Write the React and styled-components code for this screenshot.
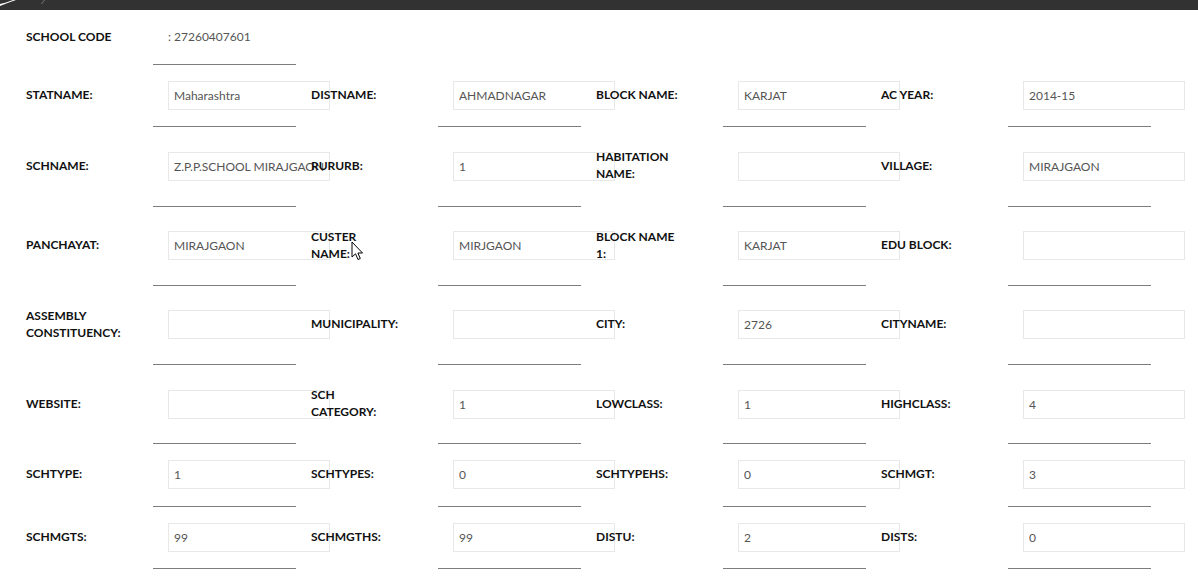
import styled, { createGlobalStyle } from "styled-components";

const rows = [
  [["STATNAME:", "Maharashtra"], ["DISTNAME:", "AHMADNAGAR"], ["BLOCK NAME:", "KARJAT"], ["AC YEAR:", "2014-15"]],
  [["SCHNAME:", "Z.P.P.SCHOOL MIRAJGAON"], ["RURURB:", "1"], ["HABITATION\nNAME:", ""], ["VILLAGE:", "MIRAJGAON"]],
  [["PANCHAYAT:", "MIRAJGAON"], ["CUSTER\nNAME:", "MIRJGAON"], ["BLOCK NAME\n1:", "KARJAT"], ["EDU BLOCK:", ""]],
  [["ASSEMBLY\nCONSTITUENCY:", ""], ["MUNICIPALITY:", ""], ["CITY:", "2726"], ["CITYNAME:", ""]],
  [["WEBSITE:", ""], ["SCH\nCATEGORY:", "1"], ["LOWCLASS:", "1"], ["HIGHCLASS:", "4"]],
  [["SCHTYPE:", "1"], ["SCHTYPES:", "0"], ["SCHTYPEHS:", "0"], ["SCHMGT:", "3"]],
  [["SCHMGTS:", "99"], ["SCHMGTHS:", "99"], ["DISTU:", "2"], ["DISTS:", "0"]],
];

export default function App() {
  return (
    <Page>
      <GlobalStyle />
      <TopBar>
        <svg width="60" height="10" viewBox="0 0 60 10">
          <path d="M0 6 C5 4 10 2 16 0 L13 0 C8 2 4 3 0 4 Z" fill="#fff" />
          <path d="M41 4 L44 0 L45 0 L42 4 Z" fill="#777" />
        </svg>
      </TopBar>
      <Form>
        <Row $first>
          <Label>SCHOOL CODE</Label>
          <Value>
            <CodeText>: 27260407601</CodeText>
          </Value>
          <Rule $col={0} $gap={12} />
        </Row>
        {rows.map((row, i) => (
          <Row key={i}>
            {row.map(([label, value]) => (
              <Cell key={label}>
                <Label>{label}</Label>
                <Value>
                  <Input readOnly value={value} />
                </Value>
              </Cell>
            ))}
            {row.map((_, c) => (
              <Rule key={c} $col={c} $gap={16} />
            ))}
          </Row>
        ))}
      </Form>
      <Cursor width="14" height="21" viewBox="0 0 14 21">
        <path d="M1 1 L1 16 L4.5 12.8 L7 18.5 L9.3 17.5 L6.9 12 L11.5 12 Z" fill="#fff" stroke="#000" strokeWidth="1" strokeLinejoin="round" />
      </Cursor>
    </Page>
  );
}

const GlobalStyle = createGlobalStyle`
  body { margin: 0; background: #fff; font-family: Lato, "Open Sans", sans-serif; }
`;
const Page = styled.div`position: relative; width: 1198px; min-height: 581px; background: #fff;`;
const TopBar = styled.div`height: 10px; background: #323232; overflow: hidden; svg { display: block; }`;
const Form = styled.div`padding-left: 11px;`;
const Row = styled.div`
  display: grid; grid-template-columns: repeat(4, 142px 143px); align-items: center;
  padding-top: ${(p) => (p.$first ? "13px" : "16px")};
`;
const Cell = styled.div`display: contents;`;
const Label = styled.div`
  grid-row: 1; box-sizing: border-box; padding: 5px 0 7px 15px;
  white-space: pre-line;
  font-size: 12px; line-height: 1.42857; font-weight: 700; color: #111; text-transform: uppercase;
`;
const Value = styled.div`grid-row: 1; padding-left: 15px; display: flex; align-items: center;`;
const CodeText = styled.span`font-size: 12px; line-height: 17px; color: #555; margin-top: -2px;`;
const Input = styled.input`
  flex: none; box-sizing: border-box; width: 162px; height: 29px; margin: 0; padding: 0 5px;
  border: 1px solid #e8e8e8; border-radius: 0; background: #fff; outline: none;
  font-family: Lato, sans-serif; font-size: 12px; color: #555;
`;
const Rule = styled.hr`
  grid-row: 2; grid-column: ${(p) => p.$col * 2 + 2}; align-self: start;
  margin: ${(p) => p.$gap}px 0 0; height: 0; border: 0; border-top: 1px solid #7d7d7d;
`;
const Cursor = styled.svg`position: absolute; left: 351px; top: 241px; pointer-events: none;`;
